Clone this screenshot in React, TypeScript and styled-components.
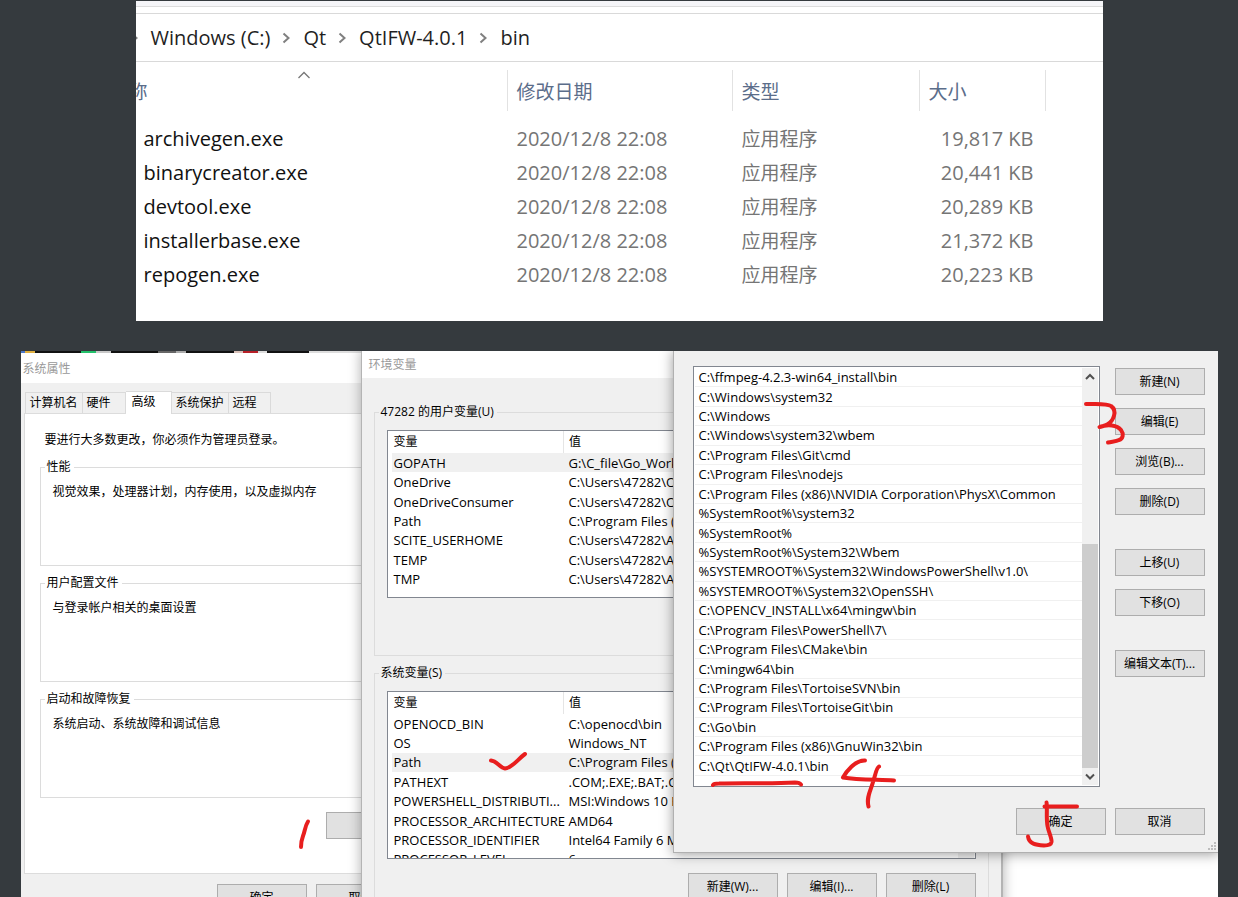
import React from "react";
import styled, { createGlobalStyle, css } from "styled-components";

const GlobalStyle = createGlobalStyle`
  *, *::before, *::after { box-sizing: border-box; }
  body {
    margin: 0;
    background: #353a3e;
    font-family: "Open Sans", "Noto Sans CJK SC", sans-serif;
    font-size: 12px;
    line-height: 16px;
    color: #000;
  }
  button { font: inherit; color: inherit; }
  ul { list-style: none; margin: 0; padding: 0; }
`;

const Page = styled.main`
  display: flex;
  flex-direction: column;
  align-items: center;
  gap: 30px;
  height: 100vh;
  padding-top: 1px;
  overflow: hidden;
`;

/* ---------- File explorer ---------- */

const Explorer = styled.section`
  flex: none;
  width: 100%;
  max-width: 967px;
  padding-bottom: 29px;
  overflow: hidden;
  background: #fff;
  font-size: 20px;
  line-height: 26px;
`;

const RibbonEdge = styled.div`
  height: 6px;
  background: #f5f5f8;
  border-bottom: 1px solid #dcdcdc;
`;

const AddressBar = styled.nav`
  display: flex;
  align-items: center;
  gap: 12px;
  height: 49px;
  margin-top: 6px;
  border-top: 1px solid #d9d9d9;
  border-bottom: 1px solid #d9d9d9;
  color: #1f1f1f;
`;

const ClippedChevron = styled.span`
  display: flex;
  margin-left: -6px;
`;

const FileTable = styled.table`
  width: 100%;
  table-layout: fixed;
  border-collapse: collapse;
  color: #757575;

  th, td { padding: 0; text-align: left; font-weight: 400; }
  td { height: 34px; padding-left: 9px; }
  td:first-child { padding-left: 8px; color: #111; }
  td:nth-child(3) { font-size: 19px; }
  td:nth-child(4) { padding: 0 12px 0 0; text-align: right; }
`;

const Col = styled.col<{ $w?: number }>`
  width: ${(p) => (p.$w ? p.$w + "px" : "auto")};
`;

const HeadCell = styled.div<{ $first?: boolean }>`
  position: relative;
  height: 41px;
  margin: 8px 0 11px;
  padding: 9px 0 0 9px;
  border-right: 1px solid #e2e2e2;
  color: #5b6d8a;
  font-size: 19px;
  ${(p) => p.$first && css`padding-left: 0; text-indent: -7px; overflow: hidden;`}
`;

const SortMark = styled.svg`
  position: absolute;
  left: 161px;
  top: 0;
`;

/* ---------- Desktop and dialogs ---------- */

const Desktop = styled.section`
  position: relative;
  flex: 1;
  min-height: 0;
  width: 100%;
  max-width: 1197px;
  overflow: hidden;
  background: #fff;
`;

const TaskStrip = styled.div`
  height: 2px;
  background: linear-gradient(
    to right,
    #4a76c8 0 4px, #e0b040 4px 14px, #111 14px 60px, #22c06a 60px 75px,
    #c8c8c8 75px 90px, #111 90px 137px, #666 137px 155px, #aaa 155px 165px,
    #111 165px 213px, #d8c0b8 213px 222px, #b82028 222px 237px, #ddd 237px 246px,
    #111 246px 288px, #ddd 288px
  );
`;

const DialogBox = styled.section`
  position: absolute;
  background: #f0f0f0;
`;

const SystemDialog = styled(DialogBox)`
  left: 0;
  top: 3px;
  bottom: -40px;
  width: 400px;
`;

const EnvDialog = styled(DialogBox)`
  left: 340px;
  top: -1px;
  bottom: -40px;
  width: 642px;
  border: 1px solid #b4b4b4;
  border-right-width: 2px;
  box-shadow: 0 0 12px rgba(0, 0, 0, 0.32);
`;

const PathDialog = styled(DialogBox)`
  left: 652px;
  right: -1px;
  top: -1px;
  padding: 15px 13px 17px 19px;
  border: 1px solid #b0b0b0;
  box-shadow: 0 1px 12px rgba(0, 0, 0, 0.4);
`;

const TitleBar = styled.h2<{ $h: number }>`
  display: flex;
  align-items: center;
  height: ${(p) => p.$h}px;
  margin: 0;
  padding-left: ${(p) => (p.$h > 28 ? 2 : 7)}px;
  background: #fff;
  color: #999;
  font-size: 12px;
  font-weight: 400;
`;

const Tabs = styled.div`
  display: flex;
  align-items: flex-end;
  height: 30px;
  padding-left: 4px;
`;

const Tab = styled.button<{ $w: number; $active?: boolean }>`
  width: ${(p) => p.$w}px;
  height: 21px;
  padding: 0 0 0 4px;
  border: 1px solid #dadada;
  border-left-width: 0;
  border-bottom: 0;
  background: #f0f0f0;
  text-align: left;
  white-space: nowrap;
  &:first-child { border-left-width: 1px; }
  ${(p) =>
    p.$active &&
    css`
      z-index: 1;
      height: 23px;
      margin-bottom: -1px;
      padding: 0 0 2px 6px;
      background: #fff;
    `}
`;

const TabPane = styled.div`
  height: 461px;
  margin-left: 3px;
  padding: 18px 0 0 15px;
  border: 1px solid #dcdcdc;
  background: #fff;
`;

const Notice = styled.p`
  margin: 0 0 11px 5px;
`;

const Group = styled.fieldset<{ $h: number }>`
  min-width: 0;
  height: ${(p) => p.$h}px;
  margin: 0 0 9px;
  padding: 0 10px 0 4px;
  border: 1px solid #dcdcdc;
  legend { padding: 0 3px 0 2px; }
  p { margin: 9px 0 0 8px; }
`;

const EnvBody = styled.div`
  padding: 26px 12px 0 12px;
`;

const Button = styled.button`
  flex: none;
  width: 90px;
  height: 27px;
  padding: 0;
  border: 1px solid #adadad;
  background: #e1e1e1;
  white-space: nowrap;
`;

const ButtonRow = styled.div<{ $top: number; $right?: number }>`
  display: flex;
  justify-content: flex-end;
  gap: 9px;
  margin-top: ${(p) => p.$top}px;
  padding-right: ${(p) => p.$right ?? 0}px;
`;

const VarBox = styled.div`
  display: flex;
  height: 168px;
  margin: 10px 2px 0 8px;
  padding-left: 4px;
  overflow: hidden;
  border: 1px solid #828790;
  background: #fff;
`;

const VarTable = styled.table<{ $h: number }>`
  flex: 1;
  width: 100%;
  height: ${(p) => p.$h}px;
  table-layout: fixed;
  border-collapse: collapse;
  th { height: 22px; border-right: 1px solid #e5e5e5; }
  th, td {
    padding: 0 0 0 2px;
    text-align: left;
    font-weight: 400;
    white-space: nowrap;
  }
  td { font-size: 13px; }
  th + th, td + td { padding-left: 5px; }
`;

const VarRow = styled.tr<{ $selected: boolean }>`
  background: ${(p) => (p.$selected ? "#f0f0f0" : "transparent")};
`;

const VarTrack = styled.div`
  width: 16px;
  margin-right: 1px;
  background: #f0f0f0;
`;

const PathMain = styled.div`
  display: flex;
  gap: 15px;
`;

const PathBox = styled.div`
  display: flex;
  flex: 1;
  height: 421px;
  padding: 1px;
  border: 1px solid #828790;
  background: #fff;
`;

const PathList = styled.ul`
  display: flex;
  flex: 1;
  flex-direction: column;
  height: 408px;
  font-size: 13px;
`;

const PathItem = styled.li`
  display: flex;
  flex: 1;
  align-items: center;
  padding-left: 4px;
  border-bottom: 1px solid #f0f0f0;
  white-space: nowrap;
`;

const ScrollBar = styled.div`
  display: flex;
  flex-direction: column;
  width: 16px;
  background: #f0f0f0;
  svg { display: block; }
`;

const Thumb = styled.div`
  height: 224px;
  margin-top: auto;
  background: #cdcdcd;
`;

const SideButtons = styled.div`
  display: flex;
  flex-direction: column;
  gap: 13px;
  padding-top: 2px;
`;

const Gap = styled.div`
  height: 8px;
`;

const Grip = styled.svg`
  position: absolute;
  right: 1px;
  bottom: 0;
`;

const PenMarks = styled.svg`
  position: absolute;
  left: 0;
  top: 0;
  pointer-events: none;
`;

const Chevron = () => (
  <svg width="9" height="12" viewBox="0 0 9 12" fill="none" stroke="#808080" strokeWidth="2" aria-hidden="true">
    <path d="M1.5 1.5 6.5 6 1.5 10.5" />
  </svg>
);

const files: [string, string][] = [
  ["archivegen.exe", "19,817 KB"],
  ["binarycreator.exe", "20,441 KB"],
  ["devtool.exe", "20,289 KB"],
  ["installerbase.exe", "21,372 KB"],
  ["repogen.exe", "20,223 KB"],
];

const crumbs = ["Windows (C:)", "Qt", "QtIFW-4.0.1", "bin"];

const userVars: [string, string][] = [
  ["GOPATH", "G:\\C_file\\Go_WorkSpace"],
  ["OneDrive", "C:\\Users\\47282\\OneDrive"],
  ["OneDriveConsumer", "C:\\Users\\47282\\OneDrive"],
  ["Path", "C:\\Program Files (x86)"],
  ["SCITE_USERHOME", "C:\\Users\\47282\\AppData"],
  ["TEMP", "C:\\Users\\47282\\AppData"],
  ["TMP", "C:\\Users\\47282\\AppData"],
];

const systemVars: [string, string][] = [
  ["OPENOCD_BIN", "C:\\openocd\\bin"],
  ["OS", "Windows_NT"],
  ["Path", "C:\\Program Files (x86)"],
  ["PATHEXT", ".COM;.EXE;.BAT;.CMD"],
  ["POWERSHELL_DISTRIBUTI...", "MSI:Windows 10 Pro"],
  ["PROCESSOR_ARCHITECTURE", "AMD64"],
  ["PROCESSOR_IDENTIFIER", "Intel64 Family 6 Model"],
  ["PROCESSOR_LEVEL", "6"],
];

const paths = [
  "C:\\ffmpeg-4.2.3-win64_install\\bin",
  "C:\\Windows\\system32",
  "C:\\Windows",
  "C:\\Windows\\system32\\wbem",
  "C:\\Program Files\\Git\\cmd",
  "C:\\Program Files\\nodejs",
  "C:\\Program Files (x86)\\NVIDIA Corporation\\PhysX\\Common",
  "%SystemRoot%\\system32",
  "%SystemRoot%",
  "%SystemRoot%\\System32\\Wbem",
  "%SYSTEMROOT%\\System32\\WindowsPowerShell\\v1.0\\",
  "%SYSTEMROOT%\\System32\\OpenSSH\\",
  "C:\\OPENCV_INSTALL\\x64\\mingw\\bin",
  "C:\\Program Files\\PowerShell\\7\\",
  "C:\\Program Files\\CMake\\bin",
  "C:\\mingw64\\bin",
  "C:\\Program Files\\TortoiseSVN\\bin",
  "C:\\Program Files\\TortoiseGit\\bin",
  "C:\\Go\\bin",
  "C:\\Program Files (x86)\\GnuWin32\\bin",
  "C:\\Qt\\QtIFW-4.0.1\\bin",
];

function Variables({ rows, selected, height, track }: {
  rows: [string, string][];
  selected: string;
  height: number;
  track?: boolean;
}) {
  return (
    <VarBox>
      <VarTable $h={height}>
        <colgroup>
          <Col $w={172} />
          <Col />
        </colgroup>
        <thead>
          <tr>
            <th>变量</th>
            <th>值</th>
          </tr>
        </thead>
        <tbody>
          {rows.map(([name, value]) => (
            <VarRow key={name} $selected={name === selected}>
              <td>{name}</td>
              <td>{value}</td>
            </VarRow>
          ))}
        </tbody>
      </VarTable>
      {track && <VarTrack />}
    </VarBox>
  );
}

export default function App() {
  return (
    <>
      <GlobalStyle />
      <Page>
        <Explorer>
          <RibbonEdge />
          <AddressBar>
            <ClippedChevron><Chevron /></ClippedChevron>
            {crumbs.map((c, i) => (
              <React.Fragment key={c}>
                {i > 0 && <Chevron />}
                <span>{c}</span>
              </React.Fragment>
            ))}
          </AddressBar>
          <FileTable>
            <colgroup>
              <Col $w={372} />
              <Col $w={225} />
              <Col $w={187} />
              <Col $w={126} />
              <Col />
            </colgroup>
            <thead>
              <tr>
                <th>
                  <HeadCell $first>
                    称
                    <SortMark width="14" height="9" viewBox="0 0 14 9" fill="none" stroke="#777" strokeWidth="1.3">
                      <path d="M1.500 8 7 2.500 12.500 8" />
                    </SortMark>
                  </HeadCell>
                </th>
                <th><HeadCell>修改日期</HeadCell></th>
                <th><HeadCell>类型</HeadCell></th>
                <th><HeadCell>大小</HeadCell></th>
                <td />
              </tr>
            </thead>
            <tbody>
              {files.map(([name, size]) => (
                <tr key={name}>
                  <td>{name}</td>
                  <td>2020/12/8 22:08</td>
                  <td>应用程序</td>
                  <td>{size}</td>
                  <td />
                </tr>
              ))}
            </tbody>
          </FileTable>
        </Explorer>

        <Desktop>
          <TaskStrip />
          <SystemDialog>
            <TitleBar $h={29}>系统属性</TitleBar>
            <Tabs role="tablist">
              <Tab role="tab" $w={58}>计算机名</Tab>
              <Tab role="tab" $w={43}>硬件</Tab>
              <Tab role="tab" $w={46} $active aria-selected>高级</Tab>
              <Tab role="tab" $w={57}>系统保护</Tab>
              <Tab role="tab" $w={42}>远程</Tab>
            </Tabs>
            <TabPane>
              <Notice>要进行大多数更改，你必须作为管理员登录。</Notice>
              <Group $h={107}>
                <legend>性能</legend>
                <p>视觉效果，处理器计划，内存使用，以及虚拟内存</p>
              </Group>
              <Group $h={107}>
                <legend>用户配置文件</legend>
                <p>与登录帐户相关的桌面设置</p>
              </Group>
              <Group $h={107}>
                <legend>启动和故障恢复</legend>
                <p>系统启动、系统故障和调试信息</p>
              </Group>
              <ButtonRow $top={14} $right={4}>
                <Button aria-label="环境变量" />
              </ButtonRow>
            </TabPane>
            <ButtonRow $top={10} $right={15}>
              <Button>确定</Button>
              <Button>取消</Button>
            </ButtonRow>
          </SystemDialog>

          <EnvDialog>
            <TitleBar $h={27}>环境变量</TitleBar>
            <EnvBody>
              <Group $h={252}>
                <legend>47282 的用户变量(U)</legend>
                <Variables rows={userVars} selected="GOPATH" height={158} />
              </Group>
              <Group $h={260}>
                <legend>系统变量(S)</legend>
                <Variables rows={systemVars} selected="Path" height={177} track />
                <ButtonRow $top={14} $right={2}>
                  <Button>新建(W)...</Button>
                  <Button>编辑(I)...</Button>
                  <Button>删除(L)</Button>
                </ButtonRow>
              </Group>
            </EnvBody>
          </EnvDialog>

          <PathDialog>
            <PathMain>
              <PathBox>
                <PathList>
                  {paths.map((p) => (
                    <PathItem key={p}>{p}</PathItem>
                  ))}
                </PathList>
                <ScrollBar>
                  <svg width="16" height="17" fill="none" stroke="#505050" strokeWidth="2">
                    <path d="M4 11 8 7 12 11" />
                  </svg>
                  <Thumb />
                  <svg width="16" height="17" fill="none" stroke="#505050" strokeWidth="2">
                    <path d="M4 6.500 8 10.500 12 6.500" />
                  </svg>
                </ScrollBar>
              </PathBox>
              <SideButtons>
                <Button>新建(N)</Button>
                <Button>编辑(E)</Button>
                <Button>浏览(B)...</Button>
                <Button>删除(D)</Button>
                <Gap />
                <Button>上移(U)</Button>
                <Button>下移(O)</Button>
                <Gap />
                <Button>编辑文本(T)...</Button>
              </SideButtons>
            </PathMain>
            <ButtonRow $top={21}>
              <Button>确定</Button>
              <Button>取消</Button>
            </ButtonRow>
            <Grip width="10" height="10" fill="#bdbdbd">
              <path d="M7 0h2v2h-2zM7 3h2v2h-2zM7 6h2v2h-2zM4 3h2v2h-2zM4 6h2v2h-2zM1 6h2v2h-2z" />
            </Grip>
          </PathDialog>

          <PenMarks
            width="1197"
            height="546"
            viewBox="21 351 1197 546"
            fill="none"
            stroke="#e81e1e"
            strokeWidth="4"
            strokeLinecap="round"
            strokeLinejoin="round"
            aria-hidden="true"
          >
            <path d="M308 821.500C305 826 305 831 303 836C301.500 840 301 843 301 847" />
            <path d="M491 760.500C497 761 500 768 505 768.500C512 768 518 759 525 754" />
            <path d="M713 785C714 783.500 716 783.500 719 783.500C745 782.500 770 784 795 782.500C798 782.500 800 783 801 784.500" />
            <path d="M865 760.500C855 760 846 772 843 777.500C858 780 878 779.500 894 780.500M879 766.500C876 768 875 777 873 782C871 790 866 797 868.500 806.500" />
            <path d="M1086 404C1096 404 1107 403 1111 406C1118 411 1113 421 1108 424C1106 426 1102 426 1099.500 427C1108 424 1117 425 1121 430C1124 434 1123 439 1119 440C1116 441.500 1112 441.500 1108 442.500" />
            <path d="M1044.500 806.500H1077M1046.500 802.500C1047.500 806 1046 818 1047.500 826C1048.500 832 1052 838 1051.500 842C1051 845 1048 845.500 1044 845.500C1036 845 1029 844 1028 836.500" />
          </PenMarks>
        </Desktop>
      </Page>
    </>
  );
}
